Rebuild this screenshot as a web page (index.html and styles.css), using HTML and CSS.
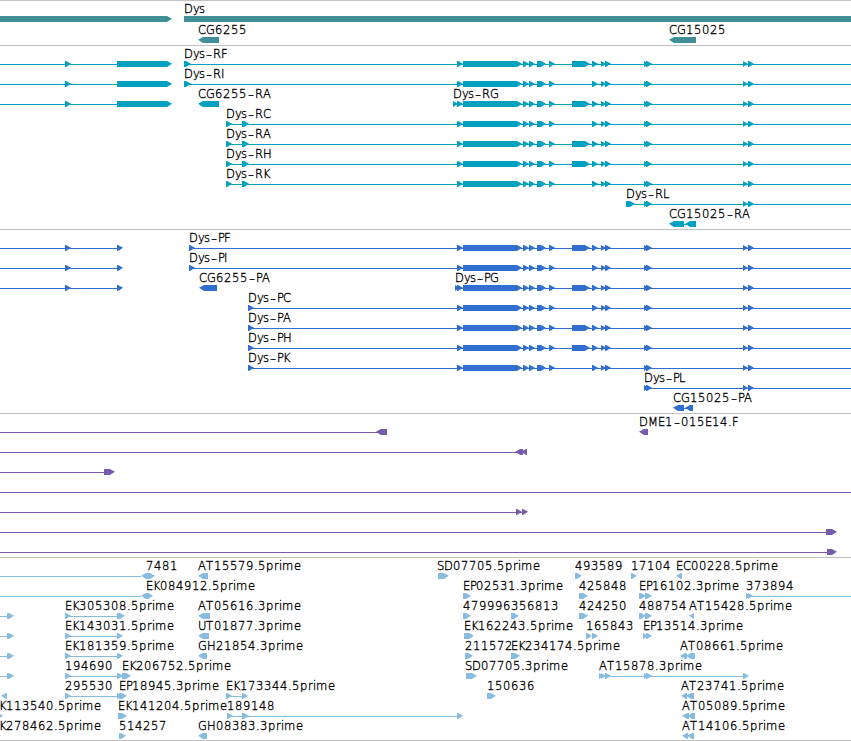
FILE: index.html
```html
<!DOCTYPE html>
<html lang="en">
<head>
  <meta charset="UTF-8" />
  <title>Dys region</title>
  <link rel="stylesheet" href="styles.css">
</head>
<body>
  <main class="browser">
    <section class="track gene" id="gene"></section>
    <section class="track transcript" id="transcript"></section>
    <section class="track cds" id="cds"></section>
    <section class="track bac" id="bac"></section>
    <section class="track est" id="est"></section>
  </main>
  <script src="tracks.js"></script>
</body>
</html>
```

FILE: styles.css
```css
body {
  margin: 0;
  background-color: #fff;
  color: #000;
  font-family: "DejaVu Sans", sans-serif;
  font-size: 11.5px;
  font-weight: 200;
}
.browser {
  display: flex;
  flex-direction: column;
  width: 851px;
  height: 741px;
  box-sizing: border-box;
  border-bottom: 1px solid #c0c0c0;
  overflow: hidden;
}
.track {
  display: flex;
  flex-direction: column;
  padding: 2px 0 1px;
  border-top: 1px solid #c0c0c0;
}
.row {
  display: block;
  flex: none;
  width: 851px;
  height: 20px;
  overflow: visible;
}
.row text {
  fill: #000;
  stroke: #000;
  stroke-width: 0.35px;
}
.row .dash {
  font-size: 17px;
}
.row rect {
  shape-rendering: crispEdges;
}
.gene, .est {
  padding-bottom: 0;
}
.gene .row {
  height: 21px;
}
.gene {
  fill: #408f96;
}
.transcript {
  fill: #00a0c0;
}
.cds {
  fill: #306fcf;
}
.bac {
  fill: #775bac;
}
.est {
  fill: #87bcde;
}
```

FILE: tracks.js
```javascript
// one feature: label, label x, blocks ("start-end", "<" in front = minus strand), connector line
function f(label, x, blocks, line) {
  return { label, x, blocks: blocks ? blocks.split(" ") : [], line };
}

const LONG = "463-522 523-529 529-535 537-546 549-555";
const TAIL = "592-598 601-606 605-611 644-649 646-652 743-748 748-754";
const WITH = "457-463 " + LONG + " 572-590 " + TAIL;
const SKIP = "457-463 " + LONG + " " + TAIL;

const rnaEnd = () => f("", 0, "65-71 117-172", [0, 117]);
const cdsEnd = () => f("", 0, "65-71 117-123", [0, 117]);
const estEnd = () => f("", 0, "7-14", [0, 7]);

const tracks = {
  gene: [
    [f("", 0, "0-172"), f("Dys", 184, "184-860")],
    [f("CG6255", 198, "<198-219"), f("CG15025", 669, "<669-696")]
  ],
  transcript: [
    [rnaEnd(), f("Dys-RF", 184, "184-191 " + WITH, [184, 851])],
    [rnaEnd(), f("Dys-RI", 184, "184-191 " + SKIP, [184, 851])],
    [rnaEnd(), f("CG6255-RA", 198, "<198-219"), f("Dys-RG", 453, "453-458 " + WITH, [453, 851])],
    [f("Dys-RC", 226, "226-232 242-249 " + SKIP, [226, 851])],
    [f("Dys-RA", 226, "226-232 242-249 " + WITH, [226, 851])],
    [f("Dys-RH", 226, "226-232 242-249 " + WITH, [226, 851])],
    [f("Dys-RK", 226, "226-232 242-249 " + SKIP, [226, 851])],
    [f("Dys-RL", 626, "626-635 644-649 646-652 743-748 748-754", [626, 851])],
    [f("CG15025-RA", 669, "<669-684 <685-696", [680, 690])]
  ],
  cds: [
    [cdsEnd(), f("Dys-PF", 189, "189-195 " + WITH, [189, 851])],
    [cdsEnd(), f("Dys-PI", 189, "189-195 " + SKIP, [189, 851])],
    [cdsEnd(), f("CG6255-PA", 199, "<199-217"), f("Dys-PG", 455, "455-460 " + WITH, [455, 851])],
    [f("Dys-PC", 248, "248-254 " + SKIP, [248, 851])],
    [f("Dys-PA", 248, "248-254 " + WITH, [248, 851])],
    [f("Dys-PH", 248, "248-254 " + WITH, [248, 851])],
    [f("Dys-PK", 248, "248-254 " + SKIP, [248, 851])],
    [f("Dys-PL", 644, "644-649 646-652 743-748 748-754", [644, 851])],
    [f("CG15025-PA", 673, "<673-684 <685-693", [680, 690])]
  ],
  bac: [
    [f("", 0, "<376-387", [0, 380]), f("DME1-015E14.F", 639, "<639-648")],
    [f("", 0, "<515-523 <521-527", [0, 520])],
    [f("", 0, "104-115", [0, 104])],
    [f("", 0, "", [0, 851])],
    [f("", 0, "516-522 522-528", [0, 522])],
    [f("", 0, "826-837", [0, 826])],
    [f("", 0, "827-837", [0, 827])]
  ],
  est: [
    [
      f("7481", 146, "<141-150 146-155", [0, 141]),
      f("AT15579.5prime", 198, "<198-208"),
      f("SD07705.5prime", 437, "438-449"),
      f("493589", 575, "575-582"),
      f("17104", 631, "631-637"),
      f("EC00228.5prime", 676, "<676-682")
    ],
    [
      f("EK084912.5prime", 146, "<141-149 146-153", [0, 141]),
      f("EP02531.3prime", 463, "463-471"),
      f("425848", 579, "579-588"),
      f("EP16102.3prime", 639, "639-646 645-652"),
      f("373894", 746, "746-751 748-753", [746, 851])
    ],
    [
      estEnd(),
      f("EK305308.5prime", 65, "65-71 117-125", [65, 117]),
      f("AT05616.3prime", 198, "<198-210"),
      f("479996", 463, "463-471"),
      f("356813", 511, "511-519"),
      f("424250", 579, "579-588"),
      f("488754", 639, "639-646 645-652"),
      f("AT15428.5prime", 689, "<689-694")
    ],
    [
      estEnd(),
      f("EK143031.5prime", 65, "65-71 117-123", [65, 117]),
      f("UT01877.3prime", 198, "<198-209"),
      f("EK162243.5prime", 464, "464-474"),
      f("165843", 586, "586-592 592-598"),
      f("EP13514.3prime", 643, "643-648 646-652")
    ],
    [
      estEnd(),
      f("EK181359.5prime", 65, "65-71 117-123", [65, 117]),
      f("GH21854.3prime", 198, "<198-207"),
      f("211572", 465, "465-473"),
      f("EK234174.5prime", 511, "511-520"),
      f("AT08661.5prime", 680, "<680-687 <686-695")
    ],
    [
      estEnd(),
      f("194690", 65, "65-71 117-123", [65, 122]),
      f("EK206752.5prime", 122, "122-131"),
      f("SD07705.3prime", 465, "466-477"),
      f("AT15878.3prime", 599, "599-604 601-606 605-611 644-649 646-652 743-749", [599, 745])
    ],
    [
      f("", 0, "<1-7"),
      f("295530", 65, "65-71", [65, 119]),
      f("EP18945.3prime", 119, "117-122 119-127"),
      f("EK173344.5prime", 226, "226-232 242-248", [226, 243]),
      f("150636", 487, "487-496"),
      f("AT23741.5prime", 681, "<681-687 <686-694")
    ],
    [
      f("K113540.5prime", -1, "-5-3"),
      f("EK141204.5prime", 118, "118-127"),
      f("189148", 227, "227-233 242-249", [227, 460]),
      f("", 0, "457-463"),
      f("AT05089.5prime", 682, "<682-689 <687-695")
    ],
    [
      f("K278462.5prime", -1, "-7-1"),
      f("514257", 119, "119-126"),
      f("GH08383.3prime", 198, "<198-207"),
      f("AT14106.5prime", 682, "<682-688 <687-694")
    ]
  ]
};

// whole-pixel advances, digits are 8
const ADV = {
  A: 8, C: 8, D: 9, E: 7, F: 6, G: 9, H: 9, I: 4, K: 7, L: 6, M: 10, P: 6, R: 8, S: 7, T: 8, U: 8,
  y: 6, s: 6, p: 8, r: 5, i: 3, m: 12, e: 7, ".": 4, "-": 8
};

function label(str, x) {
  const xs = [], ys = [];
  for (const c of str) {
    xs.push(c === "-" ? x + 1 : x);
    ys.push(c === "-" ? 11.5 : 10);
    x += ADV[c] || 8;
  }
  const html = str.replace("-", '<tspan class="dash">-</tspan>');
  return `<text x="${xs.join(" ")}" y="${ys.join(" ")}">${html}</text>`;
}

// block with a 5px pointed end, 6px high
function block(str) {
  const m = str.match(/^(<?)(-?\d+)-(\d+)$/);
  const s = +m[2], e = +m[3];
  if (m[1]) {
    const n = Math.min(s + 5, e);
    return `<path d="M${e} 13H${n}L${s} 15.7L${n} 19H${e}z"/>`;
  }
  const n = Math.max(e - 5, s);
  return `<path d="M${s} 13H${n}L${e} 15.7L${n} 19H${s}z"/>`;
}

for (const id in tracks) {
  document.getElementById(id).innerHTML = tracks[id].map((row) => {
    const parts = row.map((ft) => {
      let out = "";
      if (ft.line) out += `<rect x="${ft.line[0]}" y="16" width="${ft.line[1] - ft.line[0]}" height="1"/>`;
      out += ft.blocks.map(block).join("");
      if (ft.label) out += label(ft.label, ft.x);
      return out;
    });
    return `<svg class="row">${parts.join("")}</svg>`;
  }).join("");
}
```
